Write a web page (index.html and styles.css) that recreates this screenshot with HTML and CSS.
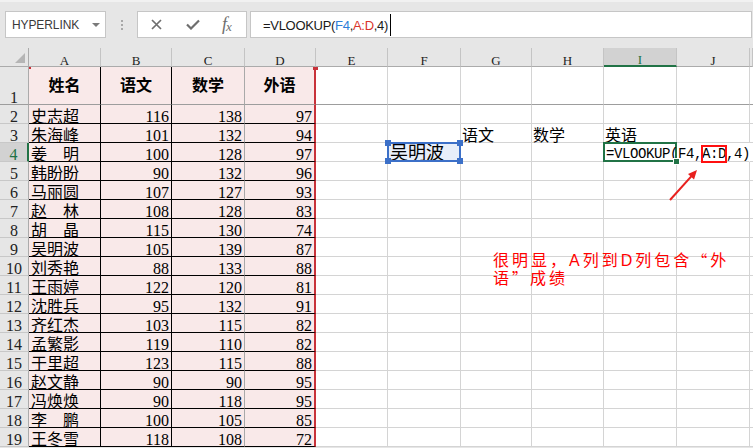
FILE: index.html
```html
<!DOCTYPE html>
<html lang="zh-CN">
<head>
<meta charset="utf-8">
<title>VLOOKUP</title>
<link rel="stylesheet" href="styles.css">
</head>
<body>
<div class="app">
  <div class="toolbar">
    <div class="namebox"><span class="nb-text">HYPERLINK</span><span class="nb-arrow"></span></div>
    <div class="grip"><i></i><i></i><i></i></div>
    <div class="fbtns">
      <svg class="ic-x" width="11" height="11" viewBox="0 0 11 11"><path d="M1 1L10 10M10 1L1 10" stroke="#6e6e6e" stroke-width="1.7" fill="none"/></svg>
      <svg class="ic-ok" width="14" height="11" viewBox="0 0 14 11"><path d="M1 5.5L5 9.5L13 1.5" stroke="#6e6e6e" stroke-width="2.2" fill="none"/></svg>
      <span class="fx">f<span class="fxx">x</span></span>
    </div>
    <div class="finput"><span class="ftext">=VLOOKUP(<span class="fb">F4</span>,<span class="fr">A:D</span>,4)</span><span class="caret"></span></div>
  </div>

  <div class="sheet">
    <div class="row hdr">
      <div class="corner"></div>
      <div class="ch">A</div><div class="ch">B</div><div class="ch">C</div><div class="ch">D</div><div class="ch">E</div><div class="ch">F</div><div class="ch">G</div><div class="ch">H</div><div class="ch selc">I</div><div class="ch">J</div><div class="ch k"></div>
    </div>
    <div class="row r1">
      <div class="rh">1</div>
      <div class="c p a h">姓名</div><div class="c p b h">语文</div><div class="c p cc h">数学</div><div class="c p d h">外语</div>
      <div class="c"></div><div class="c"></div><div class="c"></div><div class="c"></div><div class="c"></div><div class="c"></div><div class="c k"></div>
    </div>
    <div class="row">
      <div class="rh">2</div>
      <div class="c p a">史志超</div><div class="c p b n">116</div><div class="c p cc n">138</div><div class="c p d n">97</div>
      <div class="c"></div><div class="c"></div><div class="c"></div><div class="c"></div><div class="c"></div><div class="c"></div><div class="c k"></div>
    </div>
    <div class="row">
      <div class="rh">3</div>
      <div class="c p a">朱海峰</div><div class="c p b n">101</div><div class="c p cc n">132</div><div class="c p d n">94</div>
      <div class="c"></div><div class="c"></div><div class="c t">语文</div><div class="c t">数学</div><div class="c t">英语</div><div class="c"></div><div class="c k"></div>
    </div>
    <div class="row">
      <div class="rh selr">4</div>
      <div class="c p a">姜　明</div><div class="c p b n">100</div><div class="c p cc n">128</div><div class="c p d n">97</div>
      <div class="c"></div>
      <div class="c ref">吴明波<i class="hd tl"></i><i class="hd tr"></i><i class="hd bl"></i><i class="hd br"></i></div>
      <div class="c"></div><div class="c"></div>
      <div class="c act"><span class="ctext">=VLOOKUP(F4,<span class="box">A:D</span>,4)</span><i class="fh"></i></div>
      <div class="c ov"></div><div class="c k"></div>
    </div>
    <div class="row">
      <div class="rh">5</div>
      <div class="c p a">韩盼盼</div><div class="c p b n">90</div><div class="c p cc n">132</div><div class="c p d n">96</div>
      <div class="c"></div><div class="c"></div><div class="c"></div><div class="c"></div><div class="c"></div><div class="c"></div><div class="c k"></div>
    </div>
    <div class="row">
      <div class="rh">6</div>
      <div class="c p a">马丽圆</div><div class="c p b n">107</div><div class="c p cc n">127</div><div class="c p d n">93</div>
      <div class="c"></div><div class="c"></div><div class="c"></div><div class="c"></div><div class="c"></div><div class="c"></div><div class="c k"></div>
    </div>
    <div class="row">
      <div class="rh">7</div>
      <div class="c p a">赵　林</div><div class="c p b n">108</div><div class="c p cc n">128</div><div class="c p d n">83</div>
      <div class="c"></div><div class="c"></div><div class="c"></div><div class="c"></div><div class="c"></div><div class="c"></div><div class="c k"></div>
    </div>
    <div class="row">
      <div class="rh">8</div>
      <div class="c p a">胡　晶</div><div class="c p b n">115</div><div class="c p cc n">130</div><div class="c p d n">74</div>
      <div class="c"></div><div class="c"></div><div class="c"></div><div class="c"></div><div class="c"></div><div class="c"></div><div class="c k"></div>
    </div>
    <div class="row">
      <div class="rh">9</div>
      <div class="c p a">吴明波</div><div class="c p b n">105</div><div class="c p cc n">139</div><div class="c p d n">87</div>
      <div class="c"></div><div class="c"></div><div class="c"></div><div class="c"></div><div class="c"></div><div class="c"></div><div class="c k"></div>
    </div>
    <div class="row">
      <div class="rh">10</div>
      <div class="c p a">刘秀艳</div><div class="c p b n">88</div><div class="c p cc n">133</div><div class="c p d n">88</div>
      <div class="c"></div><div class="c"></div><div class="c"></div><div class="c"></div><div class="c"></div><div class="c"></div><div class="c k"></div>
    </div>
    <div class="row">
      <div class="rh">11</div>
      <div class="c p a">王雨婷</div><div class="c p b n">122</div><div class="c p cc n">120</div><div class="c p d n">81</div>
      <div class="c"></div><div class="c"></div><div class="c"></div><div class="c"></div><div class="c"></div><div class="c"></div><div class="c k"></div>
    </div>
    <div class="row">
      <div class="rh">12</div>
      <div class="c p a">沈胜兵</div><div class="c p b n">95</div><div class="c p cc n">132</div><div class="c p d n">91</div>
      <div class="c"></div><div class="c"></div><div class="c"></div><div class="c"></div><div class="c"></div><div class="c"></div><div class="c k"></div>
    </div>
    <div class="row">
      <div class="rh">13</div>
      <div class="c p a">齐红杰</div><div class="c p b n">103</div><div class="c p cc n">115</div><div class="c p d n">82</div>
      <div class="c"></div><div class="c"></div><div class="c"></div><div class="c"></div><div class="c"></div><div class="c"></div><div class="c k"></div>
    </div>
    <div class="row">
      <div class="rh">14</div>
      <div class="c p a">孟繁影</div><div class="c p b n">119</div><div class="c p cc n">110</div><div class="c p d n">82</div>
      <div class="c"></div><div class="c"></div><div class="c"></div><div class="c"></div><div class="c"></div><div class="c"></div><div class="c k"></div>
    </div>
    <div class="row">
      <div class="rh">15</div>
      <div class="c p a">于里超</div><div class="c p b n">123</div><div class="c p cc n">115</div><div class="c p d n">88</div>
      <div class="c"></div><div class="c"></div><div class="c"></div><div class="c"></div><div class="c"></div><div class="c"></div><div class="c k"></div>
    </div>
    <div class="row">
      <div class="rh">16</div>
      <div class="c p a">赵文静</div><div class="c p b n">90</div><div class="c p cc n">90</div><div class="c p d n">95</div>
      <div class="c"></div><div class="c"></div><div class="c"></div><div class="c"></div><div class="c"></div><div class="c"></div><div class="c k"></div>
    </div>
    <div class="row">
      <div class="rh">17</div>
      <div class="c p a">冯焕焕</div><div class="c p b n">90</div><div class="c p cc n">118</div><div class="c p d n">95</div>
      <div class="c"></div><div class="c"></div><div class="c"></div><div class="c"></div><div class="c"></div><div class="c"></div><div class="c k"></div>
    </div>
    <div class="row">
      <div class="rh">18</div>
      <div class="c p a">李　鹏</div><div class="c p b n">100</div><div class="c p cc n">105</div><div class="c p d n">85</div>
      <div class="c"></div><div class="c"></div><div class="c"></div><div class="c"></div><div class="c"></div><div class="c"></div><div class="c k"></div>
    </div>
    <div class="row">
      <div class="rh">19</div>
      <div class="c p a">王冬雪</div><div class="c p b n">118</div><div class="c p cc n">108</div><div class="c p d n">72</div>
      <div class="c"></div><div class="c"></div><div class="c"></div><div class="c"></div><div class="c"></div><div class="c"></div><div class="c k"></div>
    </div>
  </div>

  <i class="rc rc1"></i><i class="rc rc2"></i>
  <svg class="arrow" width="40" height="40" viewBox="0 0 40 40">
    <line x1="5" y1="35" x2="26.5" y2="11.2" stroke="#e8201e" stroke-width="2"/>
    <polygon points="32,5 29,14.4 23,9" fill="#e8201e"/>
  </svg>
  <div class="note"><div class="nl">很明显，A列到D列包含<span class="q">“</span>外</div><div class="nl">语<span class="q">”</span>成绩</div></div>
</div>
</body>
</html>
```
FILE: styles.css
```css
* { box-sizing: border-box; }
html, body { margin: 0; padding: 0; }
body {
  width: 753px;
  height: 448px;
  overflow: hidden;
  background: #e6e6e6;
  font-family: "Liberation Sans", Arial, sans-serif;
}
.app { position: relative; width: 753px; height: 448px; overflow: hidden; }

/* ---------- formula bar ---------- */
.toolbar {
  height: 48px;
  display: flex;
  align-items: flex-start;
  padding: 9px 1px 0 5px;
  border-top: 2px solid #f1f1f1;
  background: #e6e6e6;
}
.namebox {
  width: 101px;
  height: 27px;
  background: #fff;
  border: 1px solid #c6c6c6;
  display: flex;
  align-items: center;
  padding: 0 5px 0 6px;
}
.nb-text {
  flex: 1;
  font-size: 12px;
  color: #3a3a3a;
  letter-spacing: -0.1px;
  padding-top: 1px;
}
.nb-arrow {
  width: 0; height: 0;
  border-left: 4px solid transparent;
  border-right: 4px solid transparent;
  border-top: 4px solid #7a7a7a;
}
.grip {
  height: 27px;
  margin-left: 15px;
  display: flex;
  flex-direction: column;
  justify-content: center;
  gap: 2px;
}
.grip i { display: block; width: 2px; height: 2px; background: #a8a8a8; }
.fbtns {
  margin-left: 14px;
  width: 110px;
  height: 27px;
  background: #fff;
  border: 1px solid #c6c6c6;
  display: flex;
  align-items: center;
  padding-left: 13px;
}
.ic-ok { margin-left: 24px; }
.fx {
  margin-left: 22px;
  font: italic 18px/1 "Liberation Serif", serif;
  color: #6e6e6e;
  padding-bottom: 2px;
  letter-spacing: -1px;
}
.fxx { font-size: 13px; position: relative; top: 1px; }
.finput {
  flex: 1;
  margin-left: 3px;
  height: 27px;
  background: #fff;
  border: 1px solid #c6c6c6;
  display: flex;
  align-items: center;
  padding: 2px 0 0 12px;
  font-size: 13px;
  letter-spacing: -0.3px;
  color: #1a1a1a;
}
.fb { color: #2f7ed8; }
.fr { color: #d9342b; }
.caret {
  display: inline-block;
  width: 1px;
  height: 22px;
  background: #000;
  margin: -2px 0 0 2px;
}

/* ---------- sheet ---------- */
.sheet { background: #fff; }
.row {
  display: grid;
  grid-template-columns: 29px 72px 71px 73px 71px 72px 73px 71px 72px 73px 73px 1fr;
  height: 19px;
}
.r1 { height: 38px; }

.corner {
  position: relative;
  background: #e6e6e6;
  border-right: 1px solid #ababab;
  border-bottom: 1px solid #ababab;
}
.corner::after {
  content: "";
  position: absolute;
  left: 15px;
  top: 5px;
  width: 10px;
  height: 10px;
  background: #b5b5b5;
  clip-path: polygon(100% 0, 100% 100%, 0 100%);
}
.ch {
  background: #e6e6e6;
  border-right: 1px solid #c4c4c4;
  border-bottom: 1px solid #ababab;
  display: flex;
  justify-content: center;
  align-items: flex-end;
  font: 13px/11px "Liberation Serif", serif;
  color: #222;
}
.ch.selc {
  background: #d2d2d2;
  color: #217346;
  border-bottom: 2px solid #217346;
}
.rh {
  background: #e6e6e6;
  border-right: 1px solid #ababab;
  border-bottom: 1px solid #c8c8c8;
  display: flex;
  justify-content: center;
  align-items: flex-end;
  font: 16px/12px "Liberation Serif", serif;
  color: #222;
}
.rh.selr {
  background: #d2d2d2;
  color: #217346;
  border-right: 2px solid #217346;
}

.c {
  border-right: 1px solid #d4d4d4;
  border-bottom: 1px solid #d4d4d4;
  display: flex;
  align-items: flex-end;
  padding: 0 2px;
  font: 16px/12px "Liberation Serif", "Noto Sans CJK SC", serif;
  color: #000;
  white-space: nowrap;
  min-width: 0;
}
.c.k { border-right: none; }
.c.t { padding-left: 1px; }
.p { background: #f9e9e9; border-bottom-color: #000; }
.a, .b { border-right-color: #000; }
.cc { border-right-color: #a9a9a9; }
.d { border-right: 2px solid #c8323a; }
.n { justify-content: flex-end; }

.r1 > div { border-bottom-color: #9d9d9d; }
.c.h {
  justify-content: center;
  align-items: center;
  font-weight: 700;
  line-height: 16px;
}

/* F4: referenced cell */
.ref {
  position: relative;
  background: #e7eef9;
  font-size: 18px;
  padding-bottom: 2px;
}
.ref::after {
  content: "";
  position: absolute;
  left: -1px; top: -1px; right: -1px; bottom: -1px;
  border: 2px solid #3c70c8;
}
.hd {
  position: absolute;
  width: 6px;
  height: 6px;
  background: #3c70c8;
  z-index: 2;
}
.hd.tl { left: -3px; top: -3px; }
.hd.tr { right: -3px; top: -3px; }
.hd.bl { left: -3px; bottom: -3px; }
.hd.br { right: -3px; bottom: -3px; }

/* I4: active cell in edit mode */
.act { position: relative; }
.act::after {
  content: "";
  position: absolute;
  left: -1px; top: -1px; right: -1px; bottom: -1px;
  border: 2px solid #217346;
}
.ctext {
  position: relative;
  z-index: 1;
  font: 14px/14px "Liberation Mono", monospace;
  letter-spacing: -0.4px;
}
.box { position: relative; }
.box::before {
  content: "";
  position: absolute;
  left: -1px; right: -1px; top: -1px; bottom: -1px;
  border: 2px solid #ff1010;
}
.fh {
  position: absolute;
  right: -4px;
  bottom: -4px;
  width: 7px;
  height: 7px;
  background: #217346;
  border: 1px solid #fff;
  z-index: 2;
}
.ov { border-right-color: transparent; }

/* overlays */
.rc { position: absolute; background: #c8323a; }
.rc1 { left: 29px; top: 67px; width: 2px; height: 2px; }
.rc2 { left: 313px; top: 67px; width: 5px; height: 3px; }
.arrow { position: absolute; left: 665px; top: 165px; }
.note {
  position: absolute;
  left: 493px;
  top: 251px;
  color: #ff0000;
  font: 16px/18px "Liberation Sans", "Noto Sans CJK SC", sans-serif;
  letter-spacing: 3px;
  white-space: nowrap;
}
.nl { height: 18px; }
.q { font-family: "Noto Sans CJK SC", sans-serif; font-size: 15px; }
```
